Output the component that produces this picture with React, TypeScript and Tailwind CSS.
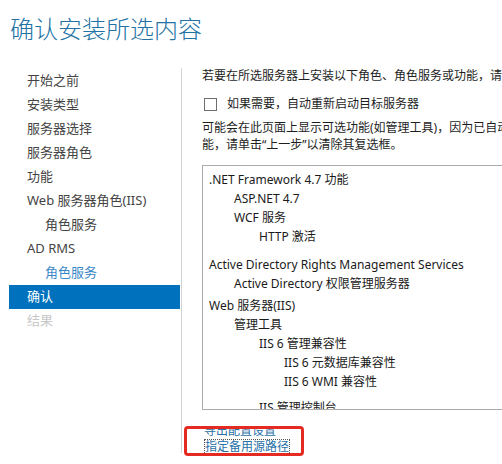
const navItems = [
  { label: '开始之前', level: 0, state: 'normal' },
  { label: '安装类型', level: 0, state: 'normal' },
  { label: '服务器选择', level: 0, state: 'normal' },
  { label: '服务器角色', level: 0, state: 'normal' },
  { label: '功能', level: 0, state: 'normal' },
  { label: 'Web 服务器角色(IIS)', level: 0, state: 'normal' },
  { label: '角色服务', level: 1, state: 'normal' },
  { label: 'AD RMS', level: 0, state: 'normal' },
  { label: '角色服务', level: 1, state: 'link' },
  { label: '确认', level: 0, state: 'active' },
  { label: '结果', level: 0, state: 'disabled' },
];

const features = [
  { label: '.NET Framework 4.7 功能', indent: 'pl-0', gap: 'mt-0' },
  { label: 'ASP.NET 4.7', indent: 'pl-[25px]', gap: 'mt-0' },
  { label: 'WCF 服务', indent: 'pl-[25px]', gap: 'mt-0' },
  { label: 'HTTP 激活', indent: 'pl-[50px]', gap: 'mt-0' },
  { label: 'Active Directory Rights Management Services', indent: 'pl-0', gap: 'mt-[9px]' },
  { label: 'Active Directory 权限管理服务器', indent: 'pl-[25px]', gap: 'mt-0' },
  { label: 'Web 服务器(IIS)', indent: 'pl-0', gap: 'mt-[3px]' },
  { label: '管理工具', indent: 'pl-[25px]', gap: 'mt-0' },
  { label: 'IIS 6 管理兼容性', indent: 'pl-[50px]', gap: 'mt-0' },
  { label: 'IIS 6 元数据库兼容性', indent: 'pl-[75px]', gap: 'mt-0' },
  { label: 'IIS 6 WMI 兼容性', indent: 'pl-[75px]', gap: 'mt-0' },
  { label: 'IIS 管理控制台', indent: 'pl-[50px]', gap: 'mt-[7px]' },
];

function NavItem({ label, level, state }: { label: string; level: number; state: string }) {
  const color =
    state === 'active'
      ? 'bg-[#0071bc] text-white'
      : state === 'disabled'
        ? 'text-[#c8c8c8]'
        : state === 'link'
          ? 'text-[#3b87c7]'
          : 'text-[#444444]';
  return (
    <div
      className={`h-6 flex items-center whitespace-nowrap ${level ? 'pl-[36px]' : 'pl-[18px]'} ${color}`}
    >
      {label}
    </div>
  );
}

export default function App() {
  return (
    <div className="w-[502px] h-[464px] overflow-hidden bg-white font-['Noto_Sans','Noto_Sans_CJK_SC',sans-serif]">
      {/* Title */}
      <h1 className="pl-[10px] pt-[13px] h-[68px] text-[24px] leading-[32px] font-light text-[#2272a4] whitespace-nowrap">
        确认安装所选内容
      </h1>

      <div className="flex h-[385px]">
        {/* Wizard steps */}
        <nav className="w-[182px] shrink-0 pl-[9px] pt-px pr-px border-r border-[#d4d4d4] text-[13px]">
          {navItems.map((item, i) => (
            <NavItem key={i} {...item} />
          ))}
        </nav>

        {/* Content */}
        <div className="flex-1 min-w-0 pl-[20px] text-[12px] text-[#1e1e1e] whitespace-nowrap">
          <p className="leading-[15px]">若要在所选服务器上安装以下角色、角色服务或功能，请单击“安装”。</p>

          <label className="mt-[13px] flex items-center h-4">
            <span className="ml-[2px] w-[13px] h-[13px] border border-[#6e6e6e] bg-white" />
            <span className="ml-[10px]">如果需要，自动重新启动目标服务器</span>
          </label>

          <p className="mt-[7px] leading-[17px]">
            可能会在此页面上显示可选功能(如管理工具)，因为已自动选择这些功能。如果不希望安装这些可选功
            <br />
            能，请单击“上一步”以清除其复选框。
          </p>

          <div className="mt-[12px] w-[340px] h-[245px] border border-[#ababab] overflow-hidden pt-[4px] pl-[6px] text-[#1a1a1a]">
            {features.map((f, i) => (
              <div key={i} className={`h-[19px] leading-[19px] ${f.indent} ${f.gap}`}>
                {f.label}
              </div>
            ))}
          </div>

          {/* Links (annotated) */}
          <div className="mt-[16px] -ml-[18px] w-[120px] h-[30px] border-[3px] border-[#e52a22] rounded-[4px]">
            <div className="h-full overflow-hidden pl-[17px] text-[#2770a6] text-[12px]">
              <div className="-mt-[5px] leading-[13px]">导出配置设置</div>
              <div className="mt-px">
                <span className="inline-block leading-[14px] border border-dotted border-[#555]">
                  指定备用源路径
                </span>
              </div>
            </div>
          </div>
        </div>
      </div>
    </div>
  );
}
